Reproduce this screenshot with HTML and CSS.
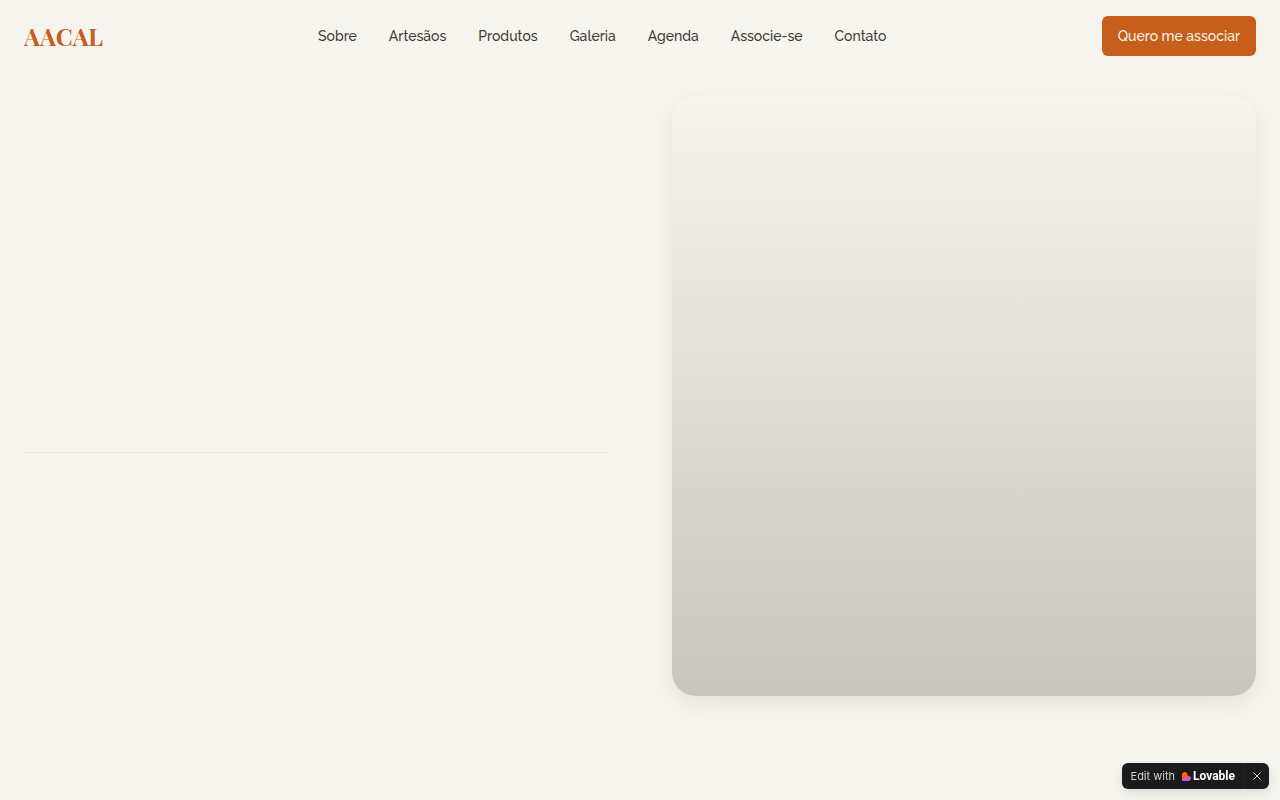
FILE: index.html
```html
<!DOCTYPE html>
<html lang="pt-br">
<head>
    <meta charset="UTF-8">
    <meta name="viewport" content="width=device-width, initial-scale=1.0">
    <title>AACAL</title>
    <link rel="stylesheet" href="styles.css">
</head>
<body>
    <!-- Topo -->
    <header class="topo">
        <a href="#" class="logo">AACAL</a>
        <nav class="menu">
            <a href="#sobre">Sobre</a>
            <a href="#artesaos">Artesãos</a>
            <a href="#produtos">Produtos</a>
            <a href="#galeria">Galeria</a>
            <a href="#agenda">Agenda</a>
            <a href="#associe-se">Associe-se</a>
            <a href="#contato">Contato</a>
        </nav>
        <button type="button" class="botao">Quero me associar</button>
    </header>

    <!-- Destaque -->
    <main class="destaque">
        <div class="texto">
            <hr class="linha">
        </div>
        <div class="imagem"></div>
    </main>

    <!-- Selo fixo -->
    <aside class="selo">
        <a href="#" class="selo-link">
            <span>Edit with</span>
            <svg class="coracao" viewBox="0 0 18 18" aria-hidden="true">
                <defs>
                    <linearGradient id="cores" x1="0.4" y1="0" x2="0.55" y2="1">
                        <stop offset="0.3" stop-color="#ff6a00"/>
                        <stop offset="0.55" stop-color="#ff4d4d"/>
                        <stop offset="0.75" stop-color="#d957d8"/>
                        <stop offset="1" stop-color="#9a66f0"/>
                    </linearGradient>
                </defs>
                <path fill="url(#cores)" d="M5.4 0C8.4 0 10.8 2.4 10.8 5.4V7.4H12.6C15.6 7.4 18 9.8 18 12.7S15.6 18 12.6 18H0V5.4C0 2.4 2.4 0 5.4 0Z"/>
            </svg>
            <strong>Lovable</strong>
        </a>
        <button type="button" class="fechar" aria-label="Fechar">
            <svg viewBox="0 0 10 10" aria-hidden="true"><path d="M1.5 1.5L8.5 8.5M8.5 1.5L1.5 8.5"/></svg>
        </button>
    </aside>
</body>
</html>
```

FILE: styles.css
```css
*{ box-sizing: border-box;}
body{ margin: 0; min-height: 100vh; background-color: #f5f4ef; color: #453a33; font-family: Raleway, Lato, sans-serif; font-size: 14px; font-weight: 500; line-height: 20px;}
a{ color: inherit; text-decoration: none;}
button{ font: inherit; border: 0; cursor: pointer;}

.topo{ display: flex; align-items: center; justify-content: space-between; padding: 16px 24px;}
.logo{ color: #c65f1b; font-family: "Playfair Display", "Liberation Serif", serif; font-size: 24px; font-weight: bold; line-height: 32px;}
.menu{ display: flex; gap: 32px;}
.botao{ height: 40px; padding: 0 16px; border-radius: 6px; background-color: #c65f1b; color: #fbf3e8;}

.destaque{ display: grid; grid-template-columns: 1fr 1fr; gap: 64px; align-items: center; padding: 24px;}
.texto{ padding-top: 112px;}
.linha{ margin: 0; border: 0; border-top: 1px solid #ebeae2;}
.imagem{ height: 600px; border-radius: 24px; background: linear-gradient(#f5f4ef, #dfddd7 50%, #c9c5be); box-shadow: 0 8px 24px -4px rgba(69, 65, 35, 0.12);}

.selo{ position: fixed; right: 11px; bottom: 11px; display: flex; align-items: center; height: 26px; border-radius: 6px; background-color: #1b1b1b; color: #d0d0d0; font-family: Inter, sans-serif; font-size: 11px; font-weight: 400; line-height: 16px; box-shadow: 0 4px 12px rgba(0, 0, 0, 0.1);}
.selo-link{ display: flex; align-items: center; padding: 0 8px 0 9px;}
.selo-link strong{ color: #fff; font-family: Roboto, sans-serif; font-size: 12px;}
.coracao{ width: 9px; height: 9px; margin: 0 2px 0 7px;}
.fechar{ display: flex; align-items: center; justify-content: center; width: 26px; height: 26px; padding: 0; border-left: 1px solid #242424; background: none;}
.fechar svg{ width: 10px; height: 10px; fill: none; stroke: #d0d0d0; stroke-width: 1;}
```
